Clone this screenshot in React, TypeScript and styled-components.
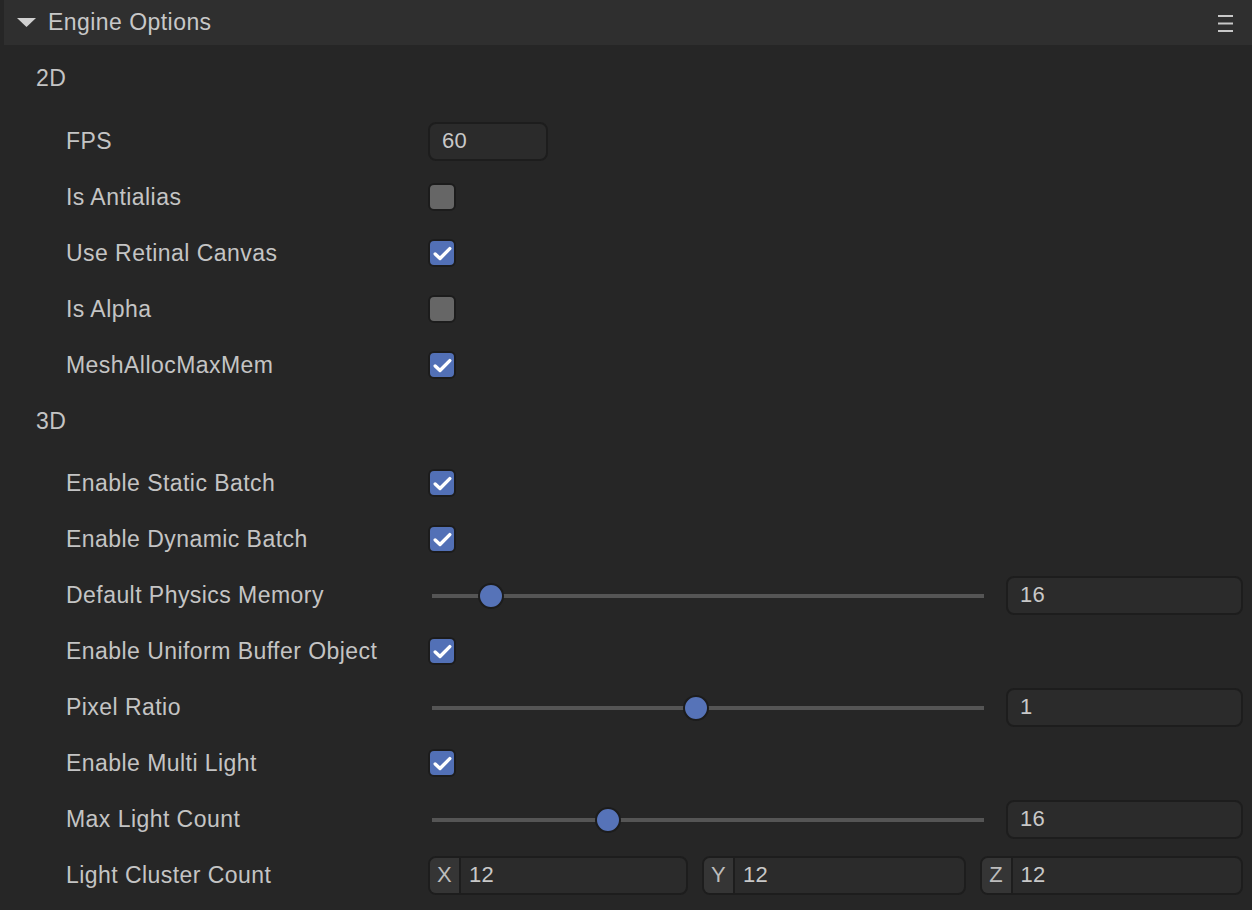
import styled, { createGlobalStyle } from 'styled-components';

const GlobalStyle = createGlobalStyle`
  html, body {
    margin: 0;
    padding: 0;
    background: #262626;
  }
  body {
    font-family: 'Liberation Sans', Arial, sans-serif;
  }
`;

const Panel = styled.div`
  width: 1252px;
  height: 910px;
  background: #262626;
  color: #c4c4c4;
  overflow: hidden;
`;

const Header = styled.div`
  margin-left: 4px;
  height: 45px;
  background: #2f2f2f;
  display: flex;
  align-items: center;
  padding: 0 18px 0 13px;
  box-sizing: border-box;
`;

const Title = styled.div`
  flex: 1;
  font-size: 23px;
  letter-spacing: 0.45px;
  color: #c8c8c8;
  margin-left: 12px;
`;

const Body = styled.div`
  padding: 5px 9px 0 0;
`;

const SectionTitle = styled.div`
  height: 56px;
  display: flex;
  align-items: center;
  padding-left: 36px;
  font-size: 23px;
  letter-spacing: 0.45px;
`;

const Rows = styled.div`
  padding-top: ${(p: { $top: number }) => p.$top}px;
`;

const Row = styled.div`
  height: 56px;
  display: grid;
  grid-template-columns: 362px 1fr;
  align-items: center;
  padding-left: 66px;
`;

const Label = styled.div`
  font-size: 23px;
  letter-spacing: 0.45px;
  color: #c4c4c4;
  white-space: nowrap;
`;

const Input = styled.div<{ $width?: number }>`
  height: 39px;
  width: ${(p) => (p.$width ? `${p.$width}px` : 'auto')};
  box-sizing: border-box;
  border: 2px solid #1d1d1d;
  border-radius: 8px;
  background: #2b2b2b;
  display: flex;
  align-items: center;
  padding-left: 12px;
  font-size: 22px;
  letter-spacing: 0.3px;
  color: #c8c8c8;
`;

const Check = styled.div<{ $on: boolean }>`
  width: 28px;
  height: 28px;
  box-sizing: border-box;
  border: 2px solid #1c1c1c;
  border-radius: 6px;
  background: ${(p) => (p.$on ? '#5270b6' : '#666666')};
  display: flex;
  align-items: center;
  justify-content: center;
`;

const SliderLine = styled.div`
  display: grid;
  grid-template-columns: 1fr 237px;
  gap: 22px;
  align-items: center;
`;

const Track = styled.div`
  position: relative;
  height: 4px;
  background: #555555;
  margin: 1px 0 0 4px;
`;

const Thumb = styled.div`
  position: absolute;
  top: 50%;
  width: 26px;
  height: 26px;
  box-sizing: border-box;
  border-radius: 50%;
  border: 2px solid #1c1c1c;
  background: #5673b8;
  transform: translate(-50%, -50%);
`;

const VecLine = styled.div`
  display: grid;
  grid-template-columns: 260px 1fr 1fr;
  gap: 14px;
`;

const VecBox = styled.div`
  height: 39px;
  box-sizing: border-box;
  border: 2px solid #1d1d1d;
  border-radius: 8px;
  background: #2b2b2b;
  display: flex;
  overflow: hidden;
  font-size: 22px;
  letter-spacing: 0.3px;
  color: #c8c8c8;
`;

const Axis = styled.div`
  width: 29px;
  background: #353535;
  border-right: 2px solid #1d1d1d;
  display: flex;
  align-items: center;
  justify-content: center;
  color: #bdbdbd;
`;

const VecValue = styled.div`
  display: flex;
  align-items: center;
  padding-left: 8px;
`;

const CheckMark = () => (
  <svg width="19" height="15" viewBox="0 0 19 15">
    <path d="M2.2 8 L7 12.5 L16.8 2.6" fill="none" stroke="#ffffff" strokeWidth="3.4" strokeLinecap="round" strokeLinejoin="round" />
  </svg>
);

const Checkbox = ({ on }: { on: boolean }) => <Check $on={on}>{on && <CheckMark />}</Check>;

const Slider = ({ pos, value }: { pos: number; value: string }) => (
  <SliderLine>
    <Track>
      <Thumb style={{ left: `${pos}%` }} />
    </Track>
    <Input>{value}</Input>
  </SliderLine>
);

type Item =
  | { label: string; kind: 'input'; value: string }
  | { label: string; kind: 'check'; on: boolean }
  | { label: string; kind: 'slider'; value: string; pos: number }
  | { label: string; kind: 'vec'; values: string[] };

const items2d: Item[] = [
  { label: 'FPS', kind: 'input', value: '60' },
  { label: 'Is Antialias', kind: 'check', on: false },
  { label: 'Use Retinal Canvas', kind: 'check', on: true },
  { label: 'Is Alpha', kind: 'check', on: false },
  { label: 'MeshAllocMaxMem', kind: 'check', on: true },
];

const items3d: Item[] = [
  { label: 'Enable Static Batch', kind: 'check', on: true },
  { label: 'Enable Dynamic Batch', kind: 'check', on: true },
  { label: 'Default Physics Memory', kind: 'slider', value: '16', pos: 10.7 },
  { label: 'Enable Uniform Buffer Object', kind: 'check', on: true },
  { label: 'Pixel Ratio', kind: 'slider', value: '1', pos: 47.8 },
  { label: 'Enable Multi Light', kind: 'check', on: true },
  { label: 'Max Light Count', kind: 'slider', value: '16', pos: 31.9 },
  { label: 'Light Cluster Count', kind: 'vec', values: ['12', '12', '12'] },
];

function renderControl(item: Item) {
  switch (item.kind) {
    case 'input':
      return <Input $width={120}>{item.value}</Input>;
    case 'check':
      return <Checkbox on={item.on} />;
    case 'slider':
      return <Slider pos={item.pos} value={item.value} />;
    case 'vec':
      return (
        <VecLine>
          {['X', 'Y', 'Z'].map((axis, i) => (
            <VecBox key={axis}>
              <Axis>{axis}</Axis>
              <VecValue>{item.values[i]}</VecValue>
            </VecBox>
          ))}
        </VecLine>
      );
  }
}

function App() {
  return (
    <Panel>
      <GlobalStyle />
      <Header>
        <svg width="19" height="10" viewBox="0 0 19 10">
          <polygon points="0,0 19,0 9.5,9" fill="#d0d0d0" />
        </svg>
        <Title>Engine Options</Title>
        <svg width="16" height="18" viewBox="0 0 16 18">
          <rect x="0" y="1" width="15" height="2" fill="#c8c8c8" />
          <rect x="0" y="8.5" width="15" height="2" fill="#c8c8c8" />
          <rect x="0" y="16" width="15" height="2" fill="#c8c8c8" />
        </svg>
      </Header>
      <Body>
        <SectionTitle>2D</SectionTitle>
        <Rows $top={7}>
          {items2d.map((item) => (
            <Row key={item.label}>
              <Label>{item.label}</Label>
              <div>{renderControl(item)}</div>
            </Row>
          ))}
        </Rows>
        <SectionTitle>3D</SectionTitle>
        <Rows $top={6}>
          {items3d.map((item) => (
            <Row key={item.label}>
              <Label>{item.label}</Label>
              <div>{renderControl(item)}</div>
            </Row>
          ))}
        </Rows>
      </Body>
    </Panel>
  );
}

export default App;
